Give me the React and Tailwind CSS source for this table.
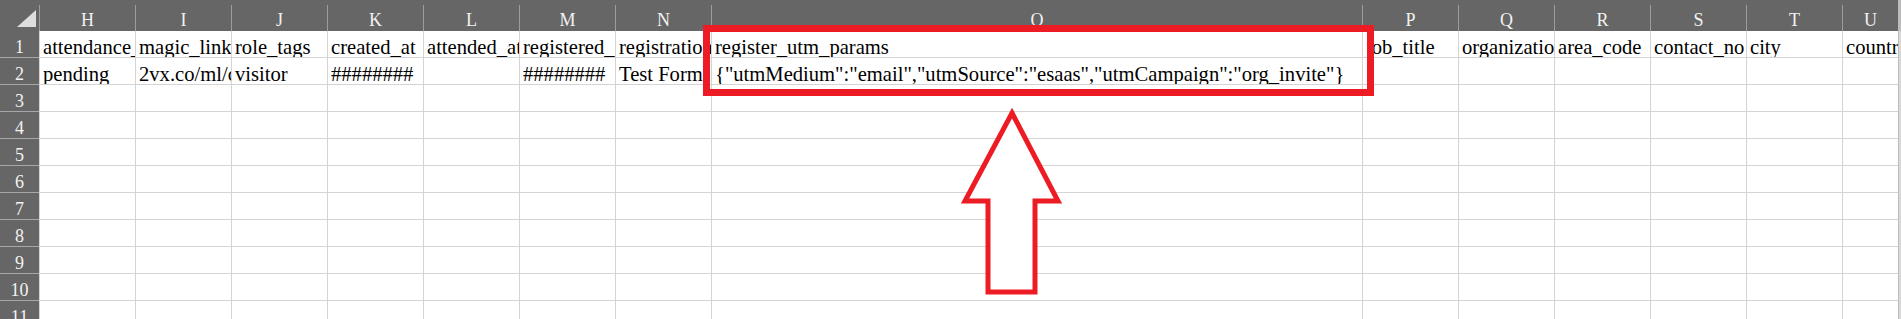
import React from "react";

const COLS = [
  { id: "H", w: "w-[96px]", a: "attendance_status", b: "pending" },
  { id: "I", w: "w-[96px]", a: "magic_link", b: "2vx.co/ml/c8f2a91" },
  { id: "J", w: "w-[96px]", a: "role_tags", b: "visitor" },
  { id: "K", w: "w-[96px]", a: "created_at", b: "########" },
  { id: "L", w: "w-[96px]", a: "attended_at", b: "" },
  { id: "M", w: "w-[96px]", a: "registered_at", b: "########" },
  { id: "N", w: "w-[96px]", a: "registration_form", b: "Test Form" },
  {
    id: "O",
    w: "w-[651px]",
    a: "register_utm_params",
    b: '{"utmMedium":"email","utmSource":"esaas","utmCampaign":"org_invite"}',
  },
  { id: "P", w: "w-[96px]", a: "job_title", b: "" },
  { id: "Q", w: "w-[96px]", a: "organization", b: "" },
  { id: "R", w: "w-[96px]", a: "area_code", b: "" },
  { id: "S", w: "w-[96px]", a: "contact_no", b: "" },
  { id: "T", w: "w-[96px]", a: "city", b: "" },
  { id: "U", w: "w-[56px]", a: "country", b: "" },
];

const ROWS = [1, 2, 3, 4, 5, 6, 7, 8, 9, 10, 11];

function cellText(col, row) {
  if (row === 1) return col.a;
  if (row === 2) return col.b;
  return "";
}

function HeaderRow() {
  return (
    <div className="flex h-[31px] shrink-0 bg-[#666666]">
      {/* corner */}
      <div className="w-[39px] shrink-0 h-[31px]">
        <svg width="39" height="31" viewBox="0 0 39 31">
          <polygon points="36,10 36,27 17,27" fill="#dedede" />
        </svg>
      </div>
      {COLS.map((c) => (
        <div
          key={c.id}
          className={`${c.w} shrink-0 mt-[5px] h-[26px] border-l border-[#9c9c9c] flex items-end justify-center pb-[2px] text-[18px] leading-[18px] text-[#f2f2f2] overflow-hidden`}
        >
          {c.id}
        </div>
      ))}
      <div className="flex-1 bg-[#bdbdbd]" />
    </div>
  );
}

function SheetRow({ row }) {
  return (
    <div className="flex h-[27px] shrink-0">
      <div className="w-[39px] shrink-0 bg-[#666666] border-b border-[#a8a8a8] flex items-end justify-center pb-[1px] text-[18px] leading-[18px] text-[#f2f2f2]">
        {row}
      </div>
      {COLS.map((c) => (
        <div
          key={c.id}
          className={`${c.w} shrink-0 border-l border-b border-[#d4d4d4] flex items-end pl-[3px] overflow-hidden whitespace-nowrap text-[20.6px] leading-[20px] text-black`}
        >
          {cellText(c, row)}
        </div>
      ))}
      <div className="flex-1 bg-[#d9d9d9] border-l border-[#bdbdbd]" />
    </div>
  );
}

export default function App() {
  return (
    <div className="relative w-[1901px] h-[319px] overflow-hidden bg-white font-['Liberation_Serif','Times_New_Roman',serif]">
      <div className="flex flex-col">
        <HeaderRow />
        {ROWS.map((r) => (
          <SheetRow key={r} row={r} />
        ))}
      </div>

      {/* annotation: red box round the O column */}
      <div className="absolute left-[703px] top-[25px] w-[671px] h-[71px] border-[7px] border-[#ed1c24]" />

      {/* annotation: up arrow */}
      <svg
        className="absolute left-0 top-0 pointer-events-none"
        width="1901"
        height="319"
        viewBox="0 0 1901 319"
      >
        <polygon
          points="1012,113 1058,201 1035,201 1035,292 988,292 988,201 965,201"
          fill="#ffffff"
          stroke="#ed1c24"
          strokeWidth="5"
          strokeLinejoin="miter"
        />
      </svg>
    </div>
  );
}
